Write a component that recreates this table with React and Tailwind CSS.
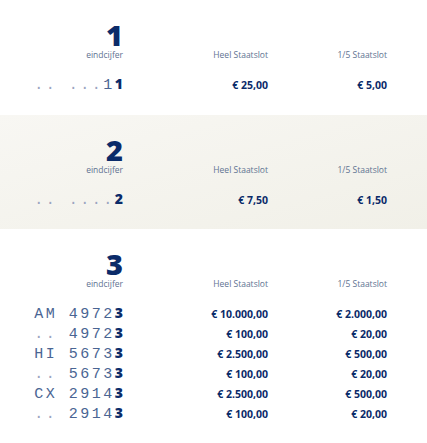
const sections = [
  {
    digit: '1',
    band: false,
    pb: 'pb-[21px]',
    rows: [{ pre: '.. ...1', last: '1', heel: '€ 25,00', vijfde: '€ 5,00' }],
  },
  {
    digit: '2',
    band: true,
    pb: 'pb-5',
    rows: [{ pre: '.. ....', last: '2', heel: '€ 7,50', vijfde: '€ 1,50' }],
  },
  {
    digit: '3',
    band: false,
    pb: 'pb-5',
    rows: [
      { pre: 'AM 4972', last: '3', heel: '€ 10.000,00', vijfde: '€ 2.000,00' },
      { pre: '.. 4972', last: '3', heel: '€ 100,00', vijfde: '€ 20,00' },
      { pre: 'HI 5673', last: '3', heel: '€ 2.500,00', vijfde: '€ 500,00' },
      { pre: '.. 5673', last: '3', heel: '€ 100,00', vijfde: '€ 20,00' },
      { pre: 'CX 2914', last: '3', heel: '€ 2.500,00', vijfde: '€ 500,00' },
      { pre: '.. 2914', last: '3', heel: '€ 100,00', vijfde: '€ 20,00' },
    ],
  },
]

const cols = 'grid grid-cols-[123px_145px_119px]'

function Ticket({ pre, last }) {
  return (
    <div className="text-right whitespace-pre font-['Liberation_Mono',monospace] text-[15px] tracking-[2.5px] text-[#4a6593]">
      {pre.split('').map((c, i) => (
        <span key={i} className={c === '.' ? 'text-[#9aa6c0]' : ''}>{c}</span>
      ))}
      <span className="font-['Open_Sans',sans-serif] font-extrabold text-[14px] tracking-normal text-[#0b2b69]">{last}</span>
    </div>
  )
}

function Section({ s }) {
  return (
    <div className={`pt-[22px] ${s.pb} ${s.band ? 'bg-linear-to-br from-[#f8f7f3] to-[#f1f0e8]' : 'bg-white'}`}>
      <div className={cols}>
        <div className="text-right text-[29px] leading-[26px] font-extrabold text-[#0b2b69]">{s.digit}</div>
      </div>
      <div className={`${cols} mt-px text-[8.5px] leading-[12px] text-[#617392]`}>
        <div className="text-right">eindcijfer</div>
        <div className="text-right">Heel Staatslot</div>
        <div className="text-right">1/5 Staatslot</div>
      </div>
      <div className="mt-[13px]">
        {s.rows.map((r, i) => (
          <div key={i} className={`${cols} h-5 leading-5 items-baseline`}>
            <Ticket pre={r.pre} last={r.last} />
            <div className="text-right text-[10.5px] font-bold text-[#0b2b69]">{r.heel}</div>
            <div className="text-right text-[10.5px] font-bold text-[#0b2b69]">{r.vijfde}</div>
          </div>
        ))}
      </div>
    </div>
  )
}

export default function App() {
  return (
    <div className="w-[427px] h-[443px] bg-white font-['Open_Sans',sans-serif] overflow-hidden">
      {sections.map(s => <Section key={s.digit} s={s} />)}
    </div>
  )
}
